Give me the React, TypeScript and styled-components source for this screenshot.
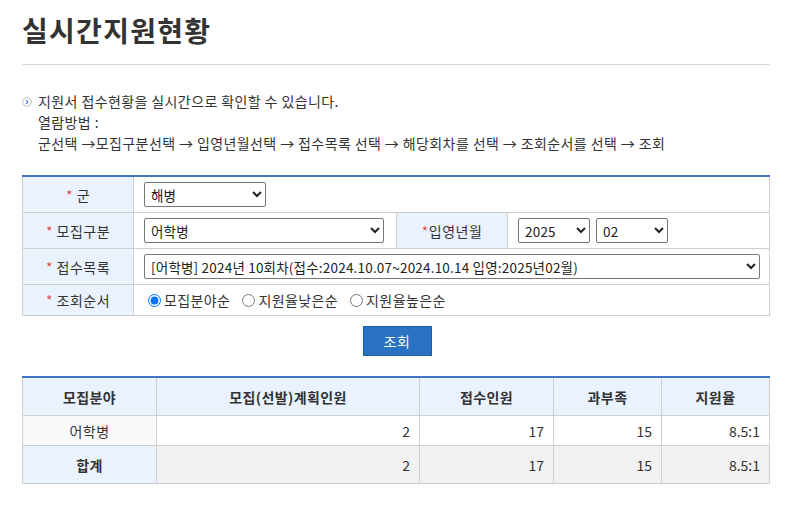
import React from "react";
import styled, { createGlobalStyle } from "styled-components";

const GlobalStyle = createGlobalStyle`
  html, body {
    margin: 0;
    padding: 0;
    background: #fff;
  }
  body {
    font-family: "Noto Sans CJK KR", "Noto Sans", sans-serif;
    color: #333;
    font-size: 14px;
  }
`;

const results = [
  { field: "어학병", plan: "2", applied: "17", over: "15", rate: "8.5:1" },
];

const App = () => {
  return (
    <>
      <GlobalStyle />
      <Page>
        <Title>실시간지원현황</Title>
        <Info>
          <Line>
            <Bullet viewBox="0 0 10 10">
              <circle cx="5" cy="5" r="4.3" fill="none" stroke="#b5b5b5" strokeWidth="0.9" />
              <path d="M4 3.2 L5.8 5 L4 6.8" fill="none" stroke="#4a7ac8" strokeWidth="1.1" />
            </Bullet>
            지원서 접수현황을 실시간으로 확인할 수 있습니다.
          </Line>
          <Line>열람방법 :</Line>
          <Line>
            군선택 →모집구분선택 → 입영년월선택 → 접수목록 선택 → 해당회차를 선택 → 조회순서를 선택 → 조회
          </Line>
        </Info>

        <FormTable>
          <colgroup>
            <col style={{ width: 111 }} />
            <col style={{ width: 263 }} />
            <col style={{ width: 111 }} />
            <col />
          </colgroup>
          <tbody>
            <tr>
              <LabelCell>
                <Star>*</Star> 군
              </LabelCell>
              <FieldCell colSpan={3}>
                <Select $width={122} defaultValue="해병">
                  <option>해병</option>
                </Select>
              </FieldCell>
            </tr>
            <tr>
              <LabelCell>
                <Star>*</Star> 모집구분
              </LabelCell>
              <FieldCell>
                <Select $width={240} defaultValue="어학병">
                  <option>어학병</option>
                </Select>
              </FieldCell>
              <LabelCell>
                <Star>*</Star>입영년월
              </LabelCell>
              <FieldCell>
                <Pair>
                  <Select $width={72} defaultValue="2025">
                    <option>2025</option>
                  </Select>
                  <Select $width={72} defaultValue="02">
                    <option>02</option>
                  </Select>
                </Pair>
              </FieldCell>
            </tr>
            <tr>
              <LabelCell>
                <Star>*</Star> 접수목록
              </LabelCell>
              <FieldCell colSpan={3}>
                <Select $width={616} defaultValue="a">
                  <option value="a">
                    [어학병] 2024년 10회차(접수:2024.10.07~2024.10.14 입영:2025년02월)
                  </option>
                </Select>
              </FieldCell>
            </tr>
            <tr>
              <LabelCell $short>
                <Star>*</Star> 조회순서
              </LabelCell>
              <FieldCell colSpan={3} $short>
                <Radios>
                  <RadioLabel>
                    <input type="radio" name="order" defaultChecked />
                    모집분야순
                  </RadioLabel>
                  <RadioLabel>
                    <input type="radio" name="order" />
                    지원율낮은순
                  </RadioLabel>
                  <RadioLabel>
                    <input type="radio" name="order" />
                    지원율높은순
                  </RadioLabel>
                </Radios>
              </FieldCell>
            </tr>
          </tbody>
        </FormTable>

        <ButtonRow>
          <SearchButton type="button">조회</SearchButton>
        </ButtonRow>

        <ResultTable>
          <colgroup>
            <col style={{ width: 134 }} />
            <col style={{ width: 263 }} />
            <col style={{ width: 134 }} />
            <col style={{ width: 108 }} />
            <col />
          </colgroup>
          <thead>
            <tr>
              <Th>모집분야</Th>
              <Th>모집(선발)계획인원</Th>
              <Th>접수인원</Th>
              <Th>과부족</Th>
              <Th>지원율</Th>
            </tr>
          </thead>
          <tbody>
            {results.map((r) => (
              <tr key={r.field}>
                <FieldName>{r.field}</FieldName>
                <Num>{r.plan}</Num>
                <Num>{r.applied}</Num>
                <Num>{r.over}</Num>
                <Num>{r.rate}</Num>
              </tr>
            ))}
            <tr>
              <TotalLabel>합계</TotalLabel>
              <Num $total>2</Num>
              <Num $total>17</Num>
              <Num $total>15</Num>
              <Num $total>8.5:1</Num>
            </tr>
          </tbody>
        </ResultTable>
      </Page>
    </>
  );
};

export default App;

const Page = styled.div`
  width: 748px;
  padding: 10px 0 0 22px;
`;

const Title = styled.h1`
  margin: 0;
  font-size: 28px;
  font-weight: 700;
  line-height: 40px;
  letter-spacing: 1.3px;
  color: #333;
  padding-bottom: 14px;
  border-bottom: 1px solid #d5d7dc;
`;

const Info = styled.div`
  margin-top: 26px;
  padding-left: 16px;
  font-size: 14px;
  line-height: 21px;
  letter-spacing: 0.4px;
  color: #333;
`;

const Line = styled.div`
  position: relative;
  white-space: nowrap;
`;

const Bullet = styled.svg`
  position: absolute;
  left: -16px;
  top: 6px;
  width: 10px;
  height: 10px;
`;

const FormTable = styled.table`
  width: 100%;
  margin-top: 21px;
  border-collapse: collapse;
  table-layout: fixed;
  border-top: 2px solid #4472c4;
`;

const LabelCell = styled.td<{ $short?: boolean }>`
  height: ${({ $short }) => ($short ? "30px" : "35px")};
  padding: 0;
  background: #eaf2fd;
  border: 1px solid #cfcfcf;
  text-align: center;
  font-size: 14px;
  letter-spacing: 0.5px;
  color: #333;
`;

const FieldCell = styled.td<{ $short?: boolean }>`
  height: ${({ $short }) => ($short ? "30px" : "35px")};
  padding: 0 10px;
  border: 1px solid #cfcfcf;
  background: #fff;
`;

const Star = styled.span`
  color: #d9534f;
`;

const Select = styled.select<{ $width: number }>`
  width: ${({ $width }) => $width}px;
  height: 25px;
  font-family: "Noto Sans CJK KR", "Noto Sans", sans-serif;
  font-size: 13.5px;
  letter-spacing: 0.2px;
  color: #222;
  border: 1px solid #767676;
  border-radius: 2px;
  background: #fff;
  padding: 0 2px;
  vertical-align: middle;
`;

const Pair = styled.div`
  display: flex;
  gap: 6px;
`;

const Radios = styled.div`
  display: flex;
  gap: 8px;
  font-size: 14px;
  letter-spacing: 0.4px;
`;

const RadioLabel = styled.label`
  display: inline-flex;
  align-items: center;
  gap: 1px;
  color: #333;

  input {
    margin: 0 2px 0 4px;
    width: 13px;
    height: 13px;
  }
`;

const ButtonRow = styled.div`
  display: flex;
  justify-content: center;
  padding: 10px 0 20px;
`;

const SearchButton = styled.button`
  width: 69px;
  height: 30px;
  margin-left: 2px;
  background: #2a72c2;
  border: 1px solid #1d5fa8;
  color: #fff;
  font-family: "Noto Sans CJK KR", "Noto Sans", sans-serif;
  font-size: 14px;
  letter-spacing: 0.5px;
  padding: 0;
  cursor: pointer;
`;

const ResultTable = styled.table`
  width: 100%;
  border-collapse: collapse;
  table-layout: fixed;
  border-top: 2px solid #4472c4;
  letter-spacing: 0.4px;
`;

const Th = styled.th`
  height: 37px;
  padding: 0;
  background: #eaf2fd;
  border: 1px solid #cfcfcf;
  border-top: none;
  font-size: 14px;
  font-weight: 700;
  color: #333;
`;

const FieldName = styled.td`
  height: 29px;
  padding: 0;
  background: #f9f9f9;
  border: 1px solid #cfcfcf;
  text-align: center;
  color: #333;
`;

const TotalLabel = styled.td`
  height: 37px;
  padding: 0;
  background: #eaf2fd;
  border: 1px solid #cfcfcf;
  text-align: center;
  font-weight: 700;
  color: #333;
`;

const Num = styled.td<{ $total?: boolean }>`
  padding: 0 9px 0 0;
  background: ${({ $total }) => ($total ? "#f1f1f1" : "#fff")};
  border: 1px solid #cfcfcf;
  text-align: right;
  letter-spacing: 0;
  color: #333;
`;
